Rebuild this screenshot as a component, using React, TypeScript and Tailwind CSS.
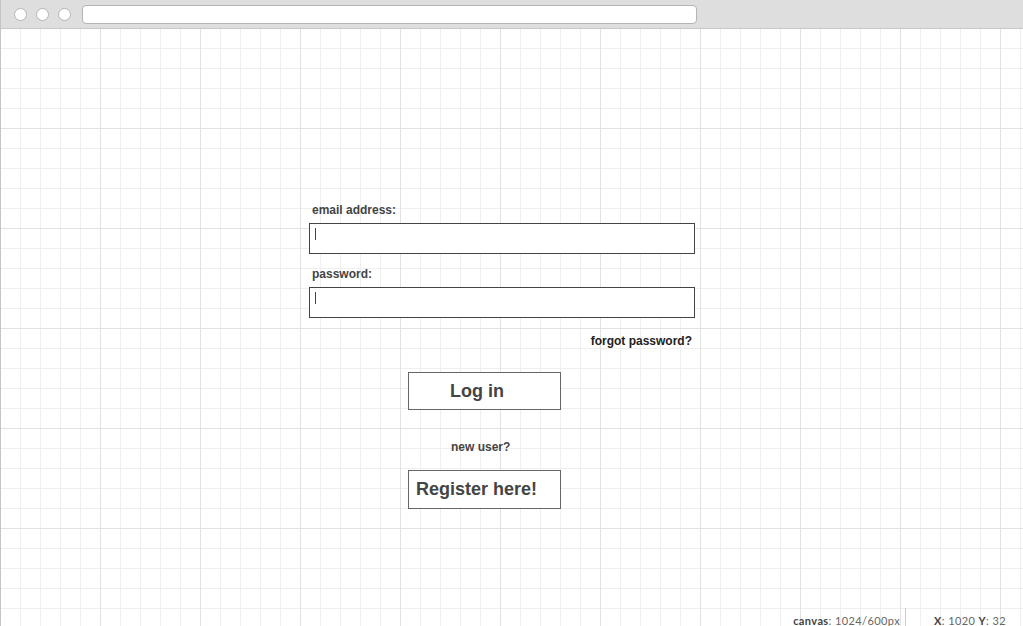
import React from "react";

const gridBg =
  "bg-[linear-gradient(to_right,#e2e2e2_1px,transparent_1px),linear-gradient(to_bottom,#e2e2e2_1px,transparent_1px),linear-gradient(to_right,#efefef_1px,transparent_1px),linear-gradient(to_bottom,#efefef_1px,transparent_1px)] bg-[size:100px_100px,100px_100px,20px_20px,20px_20px] bg-[position:-1px_-1px]";

function Circle() {
  return <div className="w-[13px] h-[13px] rounded-full bg-white border border-[#b4b4b4]" />;
}

function Field({ label }: { label: string }) {
  return (
    <div className="flex flex-col">
      <div className="pl-[3px] text-[12px] leading-[14px] font-bold text-[#444] h-[14px]">{label}</div>
      <div className="mt-[6px] h-[31px] w-[386px] border border-[#444] bg-white pl-[5px] pt-[4px]">
        <div className="w-px h-[12px] bg-[#444]" />
      </div>
    </div>
  );
}

export default function App() {
  return (
    <div
      className="w-[1023px] h-[626px] overflow-hidden bg-white border-l border-[#c4c4c4] flex flex-col"
      style={{ fontFamily: '"Liberation Sans", Arial, sans-serif' }}
    >
      <div className="h-[29px] shrink-0 bg-[#dedede] border-b border-[#c8c8c8] flex items-center pl-[13px]">
        <div className="flex items-center gap-[9px]">
          <Circle />
          <Circle />
          <Circle />
        </div>
        <div className="ml-[11px] w-[615px] h-[19px] rounded-[4px] bg-white border border-[#b4b4b4]" />
      </div>

      <div className={`flex-1 flex flex-col ${gridBg}`}>
        <div className="ml-[308px] w-[386px] pt-[174px] flex flex-col">
          <Field label="email address:" />
          <div className="mt-[13px]">
            <Field label="password:" />
          </div>
          <div className="mt-[16px] pr-[3px] text-right text-[12px] leading-[14px] font-bold text-[#222]">
            forgot password?
          </div>
          <div className="mt-[24px] ml-[99px] w-[153px] h-[38px] border border-[#666] bg-white flex items-center pl-[41px] text-[18px] leading-[20px] font-bold text-[#444]">
            Log in
          </div>
          <div className="mt-[30px] ml-[142px] text-[12px] leading-[14px] font-bold text-[#444]">new user?</div>
          <div className="mt-[16px] ml-[99px] w-[153px] h-[39px] border border-[#666] bg-white flex items-center pl-[7px] pb-[2px] text-[18px] leading-[20px] font-bold text-[#444]">
            Register here!
          </div>
        </div>

        <div
          className="mt-auto h-[18px] flex justify-end pr-[17px] text-[11px] leading-[13px] tracking-[0.4px]"
          style={{ fontFamily: "Lato, sans-serif" }}
        >
          <div className="pt-[6px] text-[#666] whitespace-nowrap">
            <span className="font-bold text-[#444]">canvas</span>: 1024/600px
          </div>
          <div className="ml-[5px] mr-[28px] w-px bg-[#cccccc]" />
          <div className="pt-[6px] text-[#666] whitespace-nowrap">
            <span className="font-bold text-[#444]">X</span>: 1020 <span className="font-bold text-[#444]">Y</span>: 32
          </div>
        </div>
      </div>
    </div>
  );
}
